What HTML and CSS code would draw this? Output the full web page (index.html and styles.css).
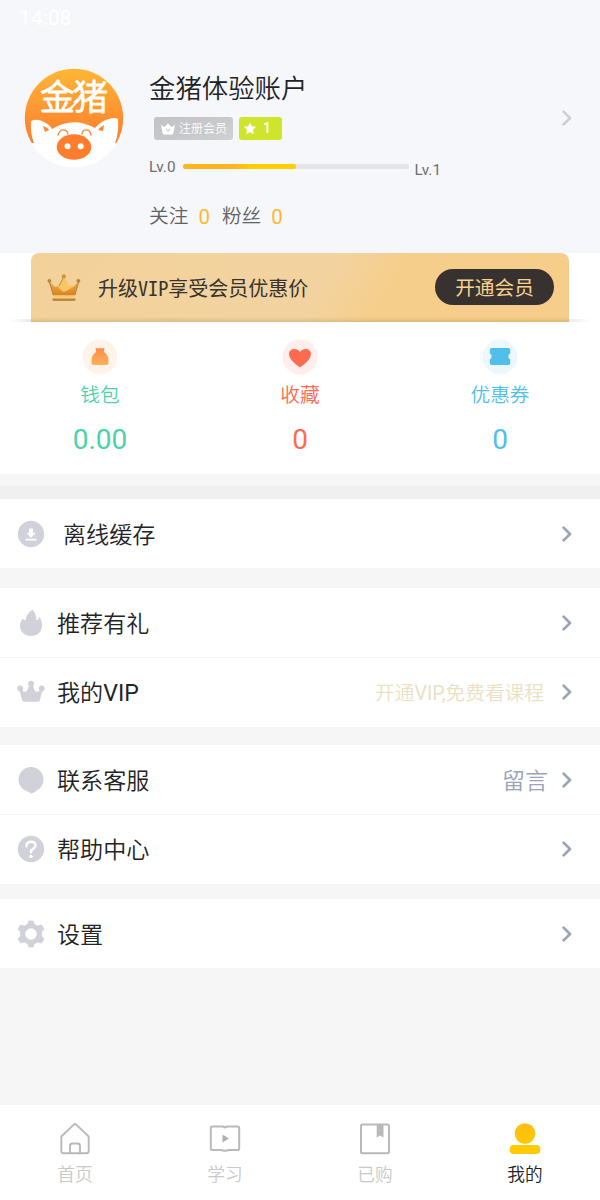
FILE: index.html
```html
<!DOCTYPE html>
<html lang="zh-CN">
<head>
<meta charset="utf-8">
<title>我的</title>
<link rel="stylesheet" href="styles.css">
</head>
<body>
<div class="page">
  <header class="header">
    <div class="status">14:08</div>
    <div class="profile">
      <svg class="avatar" viewBox="0 0 100 100">
        <defs>
          <linearGradient id="av" x1="0" y1="0" x2="0" y2="1"><stop offset="0" stop-color="#ffb736"/><stop offset=".6" stop-color="#ff8730"/><stop offset="1" stop-color="#ff7a2e"/></linearGradient>
          <clipPath id="avc"><circle cx="50" cy="50" r="49.7"/></clipPath>
        </defs>
        <circle cx="50" cy="50" r="49.2" fill="url(#av)"/>
        <g clip-path="url(#avc)">
          <path d="M7 53Q13 50 20 54Q26 57 28 61Q49 48 71 60Q77 53 85 51Q91 49 94 51Q95 65 91 75L100 77V100H0V75H10Q6 65 7 53Z" fill="#fff"/>
          <path d="M19 58Q24 60 25 62L21 64ZM80 57Q75 60 74 62L79 63Z" fill="#ff8630"/>
        </g>
        <path d="M34 67Q36 61 40 62Q43 62 44 66M58 66Q59 61 63 62Q66 62 67 67" fill="none" stroke="#ff8b3a" stroke-width="1.4" stroke-linecap="round"/>
        <ellipse cx="50" cy="79" rx="17.3" ry="12.8" fill="#ff7d2d"/>
        <circle cx="43.5" cy="78.2" r="3" fill="#fff"/><circle cx="56.7" cy="78.2" r="3" fill="#fff"/>
        <text class="logo-text" x="16" y="42">金猪</text>
        <path d="M18 42.800H38Q49 42 53 32" fill="none" stroke="#fff" stroke-width="2.200" stroke-linecap="round"/>
      </svg>
      <div class="info">
        <h1 class="name">金猪体验账户</h1>
        <div class="badges">
          <span class="badge member"><svg width="14" height="12" viewBox="0 0 14 12"><path d="M0 1.5Q2.2 4.3 4 3.6Q6 2.4 7 0Q8 2.4 10 3.6Q11.8 4.3 14 1.5L12.4 10Q12 11.5 10.5 11.5H3.5Q2 11.5 1.6 10Z" fill="#fff"/><path d="M5 6L7 8.300L9 6" fill="none" stroke="#c2c4c6" stroke-width="1"/></svg><span class="member-text">注册会员</span></span>
          <span class="badge level"><svg width="12" height="11" viewBox="0 0 12 11"><path d="M6 .2L7.6 3.6L11.5 4L8.7 6.7L9.4 10.8L6 8.8L2.6 10.8L3.3 6.7L.5 4L4.4 3.6Z" fill="#fff" stroke="#fff" stroke-width=".6" stroke-linejoin="round"/></svg>1</span>
        </div>
        <div class="progress"><span>Lv.0</span><div class="track"><div class="fill"></div></div><span class="next">Lv.1</span></div>
        <div class="follow"><span>关注</span><b>0</b><span>粉丝</span><b>0</b></div>
      </div>
      <svg class="arrow pale" viewBox="0 0 10 16"><path d="M1.6 1.6L8 8L1.6 14.4"/></svg>
    </div>
  </header>

  <section class="vip-wrap">
    <div class="vip">
      <svg class="crown" viewBox="0 0 34 28">
        <defs><linearGradient id="cr" x1="0" y1="0" x2="0" y2="1"><stop offset="0" stop-color="#f5b94b"/><stop offset="1" stop-color="#db8323"/></linearGradient></defs>
        <path d="M2 7L8 13L12 12L16.7 3L22 12L26 13L32 7L28 21H6Z" fill="url(#cr)"/>
        <path d="M16.7 3L22 12L26 13Q20 17 16.7 18Q13 16 11 13Z" fill="#f9c665"/>
        <path d="M2 7L6.2 21M28 21L32 7M12 12L16.7 3" fill="none" stroke="#a87c38" stroke-width=".8"/>
        <circle cx="2.4" cy="6.8" r="1.9" fill="#bc843b"/><circle cx="16.8" cy="2.4" r="2.1" fill="#d29436"/><circle cx="31.4" cy="6.8" r="1.9" fill="#bc843b"/>
        <path d="M6 21H28L27.5 22.5H6.5Z" fill="#f5bb57"/>
        <path d="M6.5 25.6H27.5" stroke="#aa7635" stroke-width="2.2" stroke-linecap="round"/>
        <path d="M7 24.9H27" stroke="#eba942" stroke-width="1"/>
      </svg>
      <span class="vip-text">升级<i>VIP</i>享受会员优惠价</span>
      <button class="vip-btn">开通会员</button>
    </div>
  </section>

  <section class="stats">
    <div class="stat green">
      <svg class="stat-icon" viewBox="0 0 36 36"><defs><linearGradient id="bag" x1="0" y1="0" x2="0" y2="1"><stop offset="0" stop-color="#ff8a48"/><stop offset="1" stop-color="#ffb15c"/></linearGradient></defs><circle cx="18" cy="18" r="17.5" fill="#fff3ea"/><path d="M13.6 10Q13 9 14.2 9Q16 9.8 18 9Q20 9.8 21.8 9Q23 9 22.4 10Q21.5 11.500 22 13Q26.5 16 26.500 22V24Q26.500 26 24.500 26H11.500Q9.500 26 9.500 24V22Q9.500 16 14 13Q14.500 11.500 13.600 10Z" fill="url(#bag)"/></svg>
      <span class="stat-label">钱包</span><span class="stat-num">0.00</span>
    </div>
    <div class="stat red">
      <svg class="stat-icon" viewBox="0 0 36 36"><circle cx="18" cy="18" r="17.5" fill="#ffeeec"/><path d="M18 28.500Q13 25 9.600 21.200C4.500 14.500 8 10 12 10C15.500 10 17 11.500 18 13C19 11.500 20.500 10 24 10C28 10 31.500 14.500 26.400 21.200Q23 25 18 28.500Z" fill="#ff6b4f"/></svg>
      <span class="stat-label">收藏</span><span class="stat-num">0</span>
    </div>
    <div class="stat blue">
      <svg class="stat-icon" viewBox="0 0 36 36"><circle cx="18" cy="18" r="17.500" fill="#edf8fe"/><path d="M9.500 9H26.500Q28.200 9 28.200 10.700V14.500Q26.300 15.400 26.300 17.500T28.200 20.500V24.300Q28.200 26 26.500 26H9.500Q7.800 26 7.800 24.300V20.500Q9.700 19.600 9.700 17.500T7.800 14.500V10.700Q7.800 9 9.500 9Z" fill="#50bfe9"/></svg>
      <span class="stat-label">优惠券</span><span class="stat-num">0</span>
    </div>
  </section>
  <div class="divider"></div>

  <section class="group g1">
    <div class="row offline"><svg class="icon" viewBox="0 0 28 28"><circle cx="14" cy="14" r="13.200" fill="#d1d2d9"/><path d="M12 8.500H16V13H18.800L14 17.700L9.200 13H12ZM8.500 18.800H19.500V20.500H8.500Z" fill="#fff"/></svg><span class="label">离线缓存</span><svg class="arrow" viewBox="0 0 10 16"><path d="M1.6 1.6L8 8L1.6 14.4"/></svg></div>
  </section>
  <section class="group g2">
    <div class="row"><svg class="icon" viewBox="0 0 28 28"><path d="M15.500 .8Q9 5 8.500 11.500Q6.500 11 5.500 9.500Q3 13 3 16.500C3 23 8 27 14 27S25 23 25 16.500Q25 11.500 22.500 7.500Q22 10.500 19.500 11.500Q19 4 15.500 .8Z" fill="#d1d2d9"/></svg><span class="label">推荐有礼</span><svg class="arrow" viewBox="0 0 10 16"><path d="M1.6 1.6L8 8L1.6 14.4"/></svg></div>
    <div class="row"><svg class="icon" viewBox="0 0 28 28"><g fill="#d1d2d9"><circle cx="3.300" cy="10.500" r="2.900"/><circle cx="14" cy="5.800" r="3"/><circle cx="24.700" cy="10.500" r="2.900"/><path d="M2.500 12Q6 13 8.500 14Q11.500 12 12 7H16Q16.500 12 19.500 14Q22 13 25.500 12L23 22Q22.700 23.800 21 23.800H7Q5.300 23.800 5 22Z"/></g></svg><span class="label">我的<span class="latin">VIP</span></span><span class="note gold">开通<span class="latin">VIP,</span>免费看课程</span><svg class="arrow" viewBox="0 0 10 16"><path d="M1.6 1.6L8 8L1.6 14.4"/></svg></div>
  </section>
  <section class="group g3">
    <div class="row"><svg class="icon" viewBox="0 0 28 28"><circle cx="14" cy="13.500" r="12.500" fill="#d1d2d9"/><path d="M10.500 25Q12.500 25.500 13.500 27.500Q17 27 19 25Z" fill="#d1d2d9"/></svg><span class="label">联系客服</span><span class="note message">留言</span><svg class="arrow" viewBox="0 0 10 16"><path d="M1.6 1.6L8 8L1.6 14.4"/></svg></div>
    <div class="row"><svg class="icon" viewBox="0 0 28 28"><circle cx="14" cy="14" r="13.200" fill="#d1d2d9"/><path d="M9.500 11.200Q9.500 6.800 14 6.800Q18.500 6.800 18.500 10.500Q18.500 12.200 16.300 13.700Q14 15 14 17.300" fill="none" stroke="#fff" stroke-width="2.500" stroke-linecap="round"/><circle cx="14" cy="21.400" r="1.700" fill="#fff"/></svg><span class="label">帮助中心</span><svg class="arrow" viewBox="0 0 10 16"><path d="M1.6 1.6L8 8L1.6 14.4"/></svg></div>
  </section>
  <section class="group g4">
    <div class="row"><svg class="icon" viewBox="0 0 28 28"><path d="M11.800 1H16.200L17.200 4.200Q19 4.900 20.300 6L24.500 5L27 9.200L24.400 12Q24.800 14 24.400 16L27 18.800L24.500 23L20.300 22Q19 23.100 17.200 23.800L16.200 27H11.800L10.800 23.800Q9 23.100 7.700 22L3.500 23L1 18.800L3.600 16Q3.200 14 3.600 12L1 9.200L3.500 5L7.700 6Q9 4.900 10.800 4.200Z" fill="#d1d2d9" stroke="#d1d2d9" stroke-width=".8" stroke-linejoin="round"/><circle cx="14" cy="14" r="5.700" fill="#fff"/></svg><span class="label">设置</span><svg class="arrow" viewBox="0 0 10 16"><path d="M1.6 1.6L8 8L1.6 14.4"/></svg></div>
  </section>

  <nav class="tabs">
    <div class="tab"><svg class="tab-icon" viewBox="0 0 32 32"><path d="M2.300 13.500L14.800 1.600Q16 .6 17.200 1.600L29.700 13.500V28Q29.700 30.200 27.500 30.200H4.500Q2.300 30.200 2.300 28ZM11 30V23Q11 20.500 13.500 20.500H18.500Q21 20.500 21 23V30" fill="none" stroke="#b9b9b9" stroke-width="1.900" stroke-linejoin="round"/></svg><span>首页</span></div>
    <div class="tab"><svg class="tab-icon" viewBox="0 0 32 32"><path d="M3.300 3.500H14L16 4.500L18 3.500H28.700Q30.200 3.500 30.200 5V25.500Q30.200 27 28.700 27H20Q18.500 27.700 16 27.700T12 27H3.300Q1.800 27 1.800 25.500V5Q1.800 3.500 3.300 3.500Z" fill="none" stroke="#b9b9b9" stroke-width="2" stroke-linejoin="round"/><path d="M13.500 11.500L20 15.500L13.500 19.500Z" fill="#b0b0b0"/></svg><span>学习</span></div>
    <div class="tab"><svg class="tab-icon" viewBox="0 0 32 32"><rect x="2" y="1.500" width="28" height="28.700" rx="1.500" fill="none" stroke="#b9b9b9" stroke-width="2"/><path d="M17.700 2H24.500V14.500L21 12.500L17.700 14.500Z" fill="#b9b9b9"/></svg><span>已购</span></div>
    <div class="tab active"><svg class="tab-icon" viewBox="0 0 32 32"><defs><linearGradient id="me" x1="0" y1="0" x2="0" y2="1"><stop offset="0" stop-color="#ffbd16"/><stop offset="1" stop-color="#ffc800"/></linearGradient></defs><circle cx="16" cy="10.600" r="10.300" fill="url(#me)"/><rect x=".7" y="22" width="30.600" height="9" rx="4" fill="#ffcb05"/></svg><span>我的</span></div>
  </nav>
</div>
</body>
</html>
```
FILE: styles.css
```css
* { box-sizing: border-box; }
body {
  margin: 0;
  font-family: Roboto, "Noto Sans CJK SC", sans-serif;
  font-weight: 350;
  color: #222326;
}
svg { display: block; flex: none; }
.latin { font-weight: 400; }
.page {
  width: 600px;
  height: 1200px;
  display: flex;
  flex-direction: column;
  background: #f6f6f6;
  overflow: hidden;
}
.header { height: 253px; flex: none; background: #f6f7fa; }
.status { height: 36px; padding-left: 19px; font-size: 21px; line-height: 36px; font-weight: 400; color: #fff; }
.profile { display: flex; padding: 32px 28px 0 24px; }
.avatar { width: 100px; height: 100px; }
.logo-text { font-size: 35px; font-weight: 350; fill: #fff; stroke: #fff; stroke-width: .8px; stroke-linejoin: round; letter-spacing: -2px; }
.info { flex: 1; margin-left: 25px; }
.name { margin: 0; height: 40px; font-size: 26.4px; line-height: 42px; font-weight: 350; }
.badges { display: flex; gap: 6px; margin: 9px 0 0 5px; }
.badge { display: flex; align-items: center; height: 23px; border-radius: 3px; color: #fff; line-height: 23px; }
.member { width: 79px; padding-left: 7px; gap: 4px; font-size: 12px; background: linear-gradient(155deg, #c1c3c5, #c8c9ca 60%, #d0d1d1); }
.member-text { padding-top: 2px; }
.level { width: 43px; padding-left: 5px; gap: 7px; font-size: 14px; font-weight: 500; background: #cee52b; }
.progress { display: flex; height: 40px; margin-top: 7px; font-size: 15.300px; font-weight: 400; line-height: 41px; color: #6c6e71; }
.track { width: 226px; height: 5px; margin: 17px 6px 0 7px; border-radius: 3px; background: #e4e4e4; }
.fill { width: 50%; height: 5px; border-radius: 3px; background: linear-gradient(90deg, #ffb51b 45%, #ffcf00 60%); }
.next { padding-top: 3px; }
.follow { display: flex; margin-top: 15px; font-size: 19.700px; line-height: 30px; color: #606163; }
.follow b { margin: 0 12px 0 10px; font-weight: 400; font-size: 20.500px; color: #ffb92b; }
.arrow { width: 10px; height: 16px; fill: none; stroke: #99a4b8; stroke-width: 2.7; stroke-linecap: round; stroke-linejoin: round; }
.pale { margin-top: 42px; stroke: #cfd0d1; }

.vip-wrap { flex: none; height: 69px; padding: 0 31px; background: linear-gradient(90deg, transparent 10px, #e9e9e9 32px, #e9e9e9 568px, transparent 590px) bottom / 100% 3px no-repeat, #fff; }
.vip {
  display: flex;
  align-items: center;
  height: 69px;
  padding: 0 15px 0 16px;
  border-radius: 8px 8px 0 0;
  background: linear-gradient(0deg, rgba(155, 119, 58, .25), transparent 5px), linear-gradient(120deg, #f3d19a 0, #f2d3a0 53%, #f6ce8b 66%, #f6cd8a 100%);
}
.crown { width: 34px; height: 28px; }
.vip-text { flex: 1; margin-left: 17px; font-family: "Noto Sans CJK SC", sans-serif; font-size: 20px; font-weight: 400; white-space: nowrap; color: #37332f; }
.vip-text i { font-family: "Noto Sans Mono CJK SC", "DejaVu Sans Mono", monospace; font-style: normal; font-size: 20.200px; }
.vip-btn { width: 119px; height: 36px; margin-top: -1px; padding: 0; border: 0; border-radius: 18px; background: #37322f; font: 400 19.700px/36px "Noto Sans CJK SC", sans-serif; color: #f6d18f; }

.stats { flex: none; display: flex; height: 152px; padding-top: 17px; background: #fff; }
.stat { flex: 1; display: flex; flex-direction: column; align-items: center; }
.stat-icon { width: 36px; height: 36px; }
.stat-label { margin-top: 6px; font-size: 19.700px; line-height: 30px; }
.stat-num { margin-top: 9px; font-size: 28px; line-height: 40px; font-weight: 400; }
.green { color: #4bd2a9; }
.red { color: #ff6b50; }
.blue { color: #50bfe9; }
.divider { flex: none; height: 25px; background: linear-gradient(#f6f6f6 12px, #f0f0f0 12px); }

.group { flex: none; background: #fff; }
.g2 { margin-top: 20px; }
.g3 { margin-top: 18px; }
.g4 { margin-top: 15px; }
.row { display: flex; align-items: center; height: 69px; padding: 0 28px 0 17px; }
.row + .row { height: 70px; padding-bottom: 1px; border-top: 1px solid #f3f3f3; }
.icon { width: 28px; height: 28px; }
.label { flex: 1; margin-left: 12px; padding-top: 4px; font-size: 23.100px; line-height: 36px; }
.offline .label { margin-left: 18px; }
.note { margin-right: 18px; padding-top: 3px; font-size: 19.700px; line-height: 34px; }
.gold { color: #ebdfc4; }
.message { margin-right: 14px; padding-top: 4px; font-size: 23px; color: #99a4b8; }

.tabs { flex: none; display: flex; height: 95px; margin-top: auto; padding-top: 18px; background: #fff; }
.tab { flex: 1; display: flex; flex-direction: column; align-items: center; font-size: 17.700px; line-height: 26px; color: #c9c9c9; }
.tab span { margin-top: 7px; }
.tab-icon { width: 32px; height: 32px; }
.active { color: #222326; }
```
